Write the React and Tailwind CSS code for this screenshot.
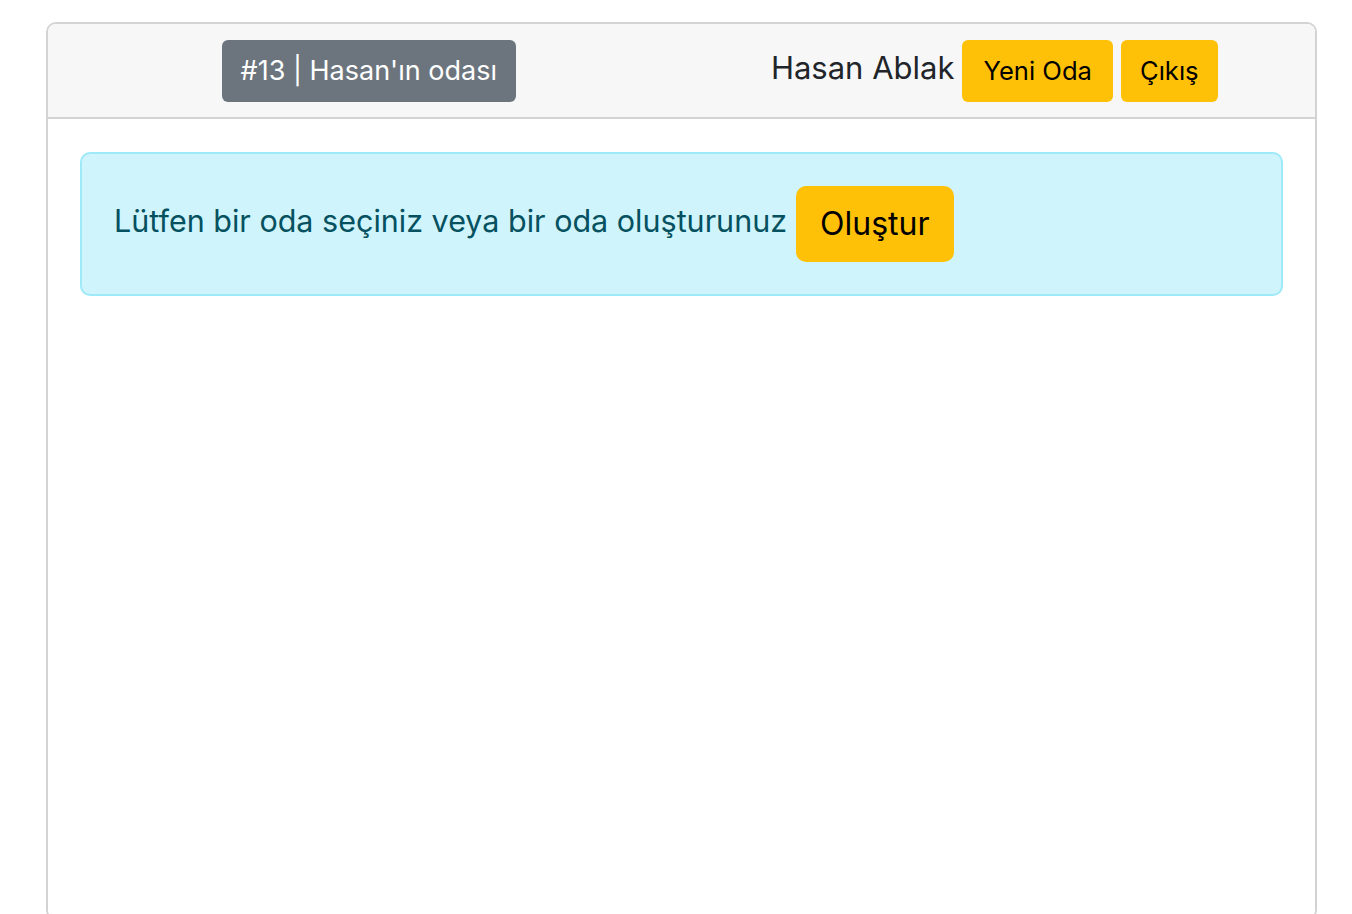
export default function App() {
  return (
    <div className="min-h-[914px] bg-white" style={{ fontFamily: "Inter, 'Noto Sans', sans-serif" }}>
      <div className="pt-[22px] pl-[46px]">
        <div className="w-[1271px] h-[898px] border-2 border-[#d3d3d3] rounded-[10px] overflow-hidden flex flex-col">
          <div className="h-[95px] bg-[#f7f7f7] border-b-2 border-[#d3d3d3] grid grid-cols-2 items-center">
            <div className="flex justify-center pl-[8px]">
              <button className="h-[62px] px-[19px] rounded-[6px] bg-[#6c757d] text-white text-[27px] leading-none">
                #13 | Hasan'ın odası
              </button>
            </div>
            <div className="flex justify-center items-center gap-[8px] pr-[8px]">
              <span className="text-[#212529] text-[31px] leading-none -mt-[6px]">Hasan Ablak</span>
              <button className="h-[62px] px-[21px] rounded-[6px] bg-[#ffc107] text-black text-[25.6px] leading-none">
                Yeni Oda
              </button>
              <button className="h-[62px] px-[19px] rounded-[6px] bg-[#ffc107] text-black text-[25.6px] leading-none">
                Çıkış
              </button>
            </div>
          </div>
          <div className="p-[32px] pt-[33px] bg-white flex-1">
            <div className="border-2 border-[#9eeaf9] bg-[#cff4fc] rounded-[10px] p-[32px] flex items-center gap-[9px]">
              <span className="text-[#055160] text-[30.5px] leading-none -mt-[6px]">
                Lütfen bir oda seçiniz veya bir oda oluşturunuz
              </span>
              <button className="h-[76px] px-[24px] rounded-[10px] bg-[#ffc107] text-black text-[32px] leading-none">
                Oluştur
              </button>
            </div>
          </div>
        </div>
      </div>
    </div>
  );
}
